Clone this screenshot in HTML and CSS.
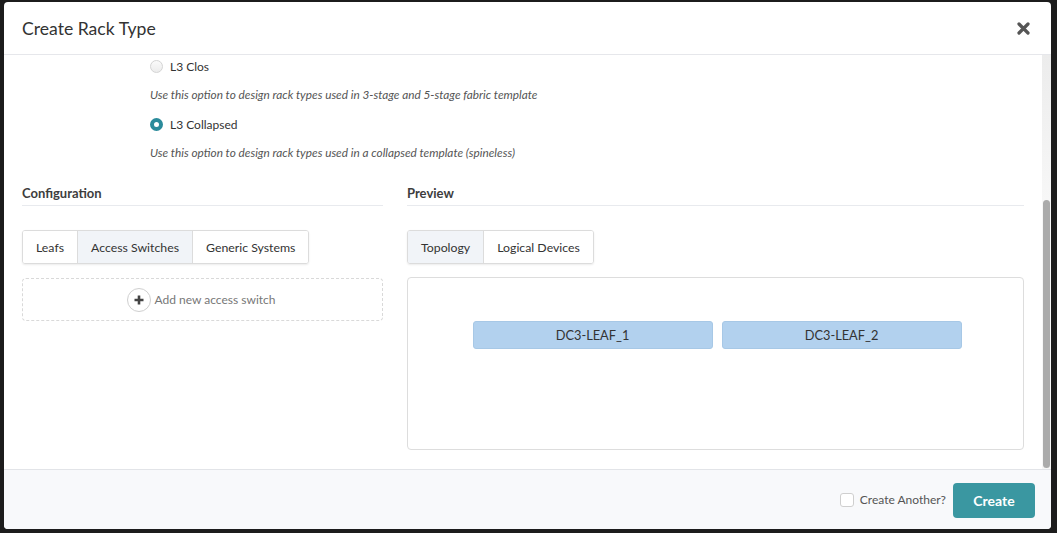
FILE: index.html
```html
<!DOCTYPE html>
<html lang="en">
<head>
    <meta charset="UTF-8">
    <meta name="viewport" content="width=device-width, initial-scale=1.0">
    <title>Create Rack Type</title>
    <link rel="stylesheet" href="styles.css">
</head>
<body>
    <div class="modal">
        <div class="modal-header">
            <h1>Create Rack Type</h1>
            <button class="close-btn" aria-label="Close">
                <svg width="13" height="13" viewBox="0 0 13 13">
                    <path d="M2 2 L11 11 M11 2 L2 11" stroke="#555" stroke-width="3.2" stroke-linecap="round"/>
                </svg>
            </button>
        </div>

        <div class="modal-body">
            <div class="body-content">
                <div class="radio-group">
                    <label class="radio-row">
                        <span class="radio"></span>
                        <span>L3 Clos</span>
                    </label>
                    <p class="hint">Use this option to design rack types used in 3-stage and 5-stage fabric template</p>
                    <label class="radio-row">
                        <span class="radio checked"></span>
                        <span>L3 Collapsed</span>
                    </label>
                    <p class="hint">Use this option to design rack types used in a collapsed template (spineless)</p>
                </div>

                <div class="columns">
                    <div class="column">
                        <h4 class="section-title">Configuration</h4>
                        <div class="tabs">
                            <div class="tab">Leafs</div>
                            <div class="tab active">Access Switches</div>
                            <div class="tab">Generic Systems</div>
                        </div>
                        <div class="add-box">
                            <span class="add-icon">
                                <svg width="12" height="12" viewBox="0 0 12 12">
                                    <path d="M6 1.5 V10.5 M1.5 6 H10.5" stroke="#444" stroke-width="2.6"/>
                                </svg>
                            </span>
                            <span>Add new access switch</span>
                        </div>
                    </div>

                    <div class="column">
                        <h4 class="section-title">Preview</h4>
                        <div class="tabs">
                            <div class="tab active">Topology</div>
                            <div class="tab">Logical Devices</div>
                        </div>
                        <div class="preview-box">
                            <div class="leaf">DC3-LEAF_1</div>
                            <div class="leaf">DC3-LEAF_2</div>
                        </div>
                    </div>
                </div>
            </div>
            <div class="scrollbar">
                <div class="scroll-thumb"></div>
            </div>
        </div>

        <div class="modal-footer">
            <label class="checkbox-row">
                <span class="checkbox"></span>
                <span>Create Another?</span>
            </label>
            <button class="btn-create">Create</button>
        </div>
    </div>
</body>
</html>
```

FILE: styles.css
```css
* {
    box-sizing: border-box;
    margin: 0;
    padding: 0;
}

body {
    font-family: Lato, 'Open Sans', 'Liberation Sans', sans-serif;
    background: #1c1c1c;
    color: #333;
    height: 533px;
    padding: 2px 6px 4px 4px;
    overflow: hidden;
}

.modal {
    background: white;
    border-radius: 4px;
    height: 527px;
    display: flex;
    flex-direction: column;
    overflow: hidden;
}

.modal-header {
    height: 53px;
    flex-shrink: 0;
    display: flex;
    align-items: center;
    justify-content: space-between;
    padding: 0 21px 0 18px;
    border-bottom: 1px solid #e6e7eb;
}

.modal-header h1 {
    font-size: 17.6px;
    font-weight: 400;
    color: #333;
    padding-top: 1px;
}

.close-btn {
    border: none;
    background: none;
    width: 13px;
    height: 13px;
    display: flex;
    margin-top: 1px;
    cursor: pointer;
}

.modal-body {
    flex: 1;
    display: flex;
    min-height: 0;
}

.body-content {
    flex: 1;
    padding: 4px 18px 0 18px;
}

.scrollbar {
    width: 9px;
    background: linear-gradient(#ececec 0, #f7f7f7 145px, #f7f7f7 100%);
    padding: 145px 1px 0 1px;
}

.scroll-thumb {
    height: 268px;
    background: #ababab;
    border-radius: 4px;
}

.radio-group {
    margin-left: 128px;
}

.radio-row {
    display: flex;
    align-items: center;
    gap: 7px;
    font-size: 12px;
    height: 14px;
}

.radio {
    width: 13px;
    height: 13px;
    border-radius: 50%;
    border: 1px solid #d4d4d4;
    background: linear-gradient(#fafafa, #ececec);
}

.radio.checked {
    border: 4px solid #2b8b9b;
    background: white;
}

.hint {
    font-size: 11.8px;
    font-style: italic;
    color: #555;
    margin: 14px 0 15px 0;
    line-height: 15px;
}

.columns {
    display: grid;
    grid-template-columns: 361px 1fr;
    gap: 24px;
    margin-top: 25px;
}

.section-title {
    font-size: 13px;
    font-weight: 700;
    color: #3d3d3d;
    padding-bottom: 4px;
    border-bottom: 1px solid #e8eaee;
    line-height: 16px;
}

.tabs {
    display: inline-flex;
    margin-top: 24px;
    border: 1px solid #dcdcdc;
    border-radius: 3px;
    box-shadow: 0 1px 2px rgba(0, 0, 0, 0.08);
    overflow: hidden;
}

.tab {
    height: 32px;
    display: flex;
    align-items: center;
    padding: 0 13px;
    font-size: 12.3px;
    color: #333;
    background: white;
    border-left: 1px solid #dcdcdc;
}

.tab:first-child {
    border-left: none;
}

.tab.active {
    background: #f1f4f8;
}

.add-box {
    margin-top: 14px;
    height: 43px;
    border: 1px dashed #d9d9d9;
    border-radius: 4px;
    display: flex;
    align-items: center;
    justify-content: center;
    gap: 4px;
    font-size: 12px;
    color: #777;
    padding-right: 3px;
}

.add-icon {
    width: 24px;
    height: 24px;
    border-radius: 50%;
    border: 1px solid #cfcfcf;
    display: flex;
    align-items: center;
    justify-content: center;
}

.preview-box {
    margin-top: 13px;
    height: 173px;
    border: 1px solid #dddddd;
    border-radius: 4px;
    display: flex;
    justify-content: center;
    align-items: flex-start;
    gap: 9px;
    padding: 43px 0 0 3px;
}

.leaf {
    width: 240px;
    height: 28px;
    background: #b2d1ee;
    border: 1px solid #a7c8e6;
    border-radius: 3px;
    display: flex;
    align-items: center;
    justify-content: center;
    font-size: 12.8px;
    color: #333;
}

.modal-footer {
    height: 60px;
    flex-shrink: 0;
    background: #f8f9fb;
    border-top: 1px solid #e2e4e8;
    display: flex;
    align-items: center;
    justify-content: flex-end;
    padding: 0 16px 0 0;
    gap: 7px;
}

.checkbox-row {
    display: flex;
    align-items: center;
    gap: 6px;
    font-size: 12px;
    color: #555;
}

.checkbox {
    width: 14px;
    height: 14px;
    border: 1px solid #cfcfcf;
    border-radius: 3px;
    background: white;
}

.btn-create {
    width: 82px;
    height: 35px;
    border: none;
    border-radius: 4px;
    background: #3a97a1;
    color: white;
    font-family: Lato, 'Open Sans', sans-serif;
    font-size: 14px;
    font-weight: 700;
    margin-top: 1px;
    cursor: pointer;
}
```
